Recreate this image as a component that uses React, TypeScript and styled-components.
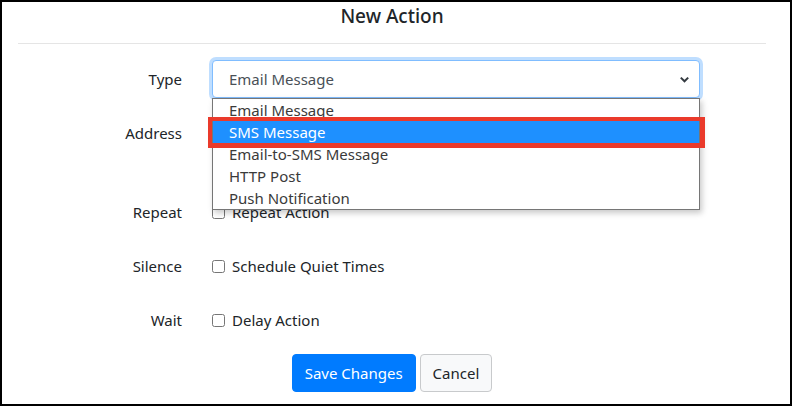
import React from "react";
import styled, { createGlobalStyle } from "styled-components";

const GlobalStyle = createGlobalStyle`
  html, body { margin: 0; padding: 0; background: #fff; }
  body { font-family: "Noto Sans", "Open Sans", sans-serif; color: #212529; }
  * { box-sizing: border-box; }
`;

const Frame = styled.div`
  width: 792px;
  height: 406px;
  border: 2px solid #000;
  background: #fff;
  overflow: hidden;
`;

const Inner = styled.div`
  width: 780px;
`;

const Header = styled.div`
  margin: 0 16px;
  height: 42px;
  border-bottom: 1px solid #e5e5e5;
  text-align: center;
`;

const Title = styled.h5`
  margin: 0;
  font-size: 19px;
  font-weight: 500;
  line-height: 28px;
  color: #212529;
`;

const Form = styled.div`
  padding-top: 16px;
`;

const Row = styled.div<{ $gap?: number }>`
  display: grid;
  grid-template-columns: 180px 488px;
  column-gap: 30px;
  align-items: start;
  margin-bottom: ${(p) => p.$gap ?? 16}px;
`;

const Label = styled.label`
  text-align: right;
  font-size: 15px;
  line-height: 24px;
  padding-top: 7px;
`;

const Control = styled.div`
  position: relative;
`;

const SelectBox = styled.div`
  height: 38px;
  border: 1px solid #80bdff;
  border-radius: 4px;
  box-shadow: 0 0 0 3px rgba(0, 123, 255, 0.25);
  display: flex;
  align-items: center;
  justify-content: space-between;
  padding: 0 9px 0 16px;
  font-size: 15px;
  color: #495057;
  background: #fff;
`;

const Chevron = styled.svg`
  width: 11px;
  height: 11px;
`;

const Dropdown = styled.ul`
  position: absolute;
  z-index: 5;
  top: 38px;
  left: 0;
  width: 488px;
  margin: 0;
  padding: 0;
  list-style: none;
  background: #fff;
  border: 1px solid #767676;
  box-shadow: 2px 3px 6px rgba(0, 0, 0, 0.22);
`;

const Option = styled.li<{ $selected?: boolean }>`
  position: relative;
  height: 22px;
  line-height: 22px;
  padding-left: 16px;
  font-size: 15px;
  color: ${(p) => (p.$selected ? "#fff" : "#3a3a3a")};
  background: ${(p) => (p.$selected ? "#1e90ff" : "transparent")};

  ${(p) =>
    p.$selected &&
    `
    &::after {
      content: "";
      position: absolute;
      top: -4px;
      bottom: -5px;
      left: -5px;
      right: -6px;
      border: 4px solid #ea3a2b;
      border-right-width: 5px;
      border-bottom-width: 5px;
    }
  `}
`;

const TextInput = styled.div`
  height: 38px;
  border: 1px solid #ced4da;
  border-radius: 4px;
`;

const HelpSpace = styled.div`
  height: 25px;
`;

const CheckLine = styled.label`
  display: flex;
  align-items: center;
  height: 38px;
  font-size: 15px;
  gap: 7px;
`;

const Box = styled.span`
  width: 13px;
  height: 13px;
  border: 1px solid #767676;
  border-radius: 2.5px;
  background: #fff;
  flex: none;
`;

const Footer = styled.div`
  display: flex;
  justify-content: center;
  gap: 4px;
`;

const Button = styled.button<{ $primary?: boolean }>`
  height: 38px;
  padding: 0 12px;
  font-family: inherit;
  font-size: 15px;
  border-radius: 4px;
  border: 1px solid ${(p) => (p.$primary ? "#007bff" : "#c8cacc")};
  background: ${(p) => (p.$primary ? "#007bff" : "#f8f9fa")};
  color: ${(p) => (p.$primary ? "#fff" : "#212529")};
`;

const options = [
  "Email Message",
  "SMS Message",
  "Email-to-SMS Message",
  "HTTP Post",
  "Push Notification",
];

export default function App() {
  return (
    <>
      <GlobalStyle />
      <Frame>
        <Inner>
          <Header>
            <Title>New Action</Title>
          </Header>
          <Form>
            <Row>
              <Label>Type</Label>
              <Control>
                <SelectBox>
                  <span>Email Message</span>
                  <Chevron viewBox="0 0 11 11">
                    <path d="M1.8 3.6 L5.5 7.3 L9.2 3.6" fill="none" stroke="#343a40" strokeWidth="2" />
                  </Chevron>
                </SelectBox>
                <Dropdown>
                  {options.map((o, i) => (
                    <Option key={o} $selected={i === 1}>
                      {o}
                    </Option>
                  ))}
                </Dropdown>
              </Control>
            </Row>
            <Row>
              <Label>Address</Label>
              <Control>
                <TextInput />
                <HelpSpace />
              </Control>
            </Row>
            <Row>
              <Label>Repeat</Label>
              <CheckLine>
                <Box />
                Repeat Action
              </CheckLine>
            </Row>
            <Row>
              <Label>Silence</Label>
              <CheckLine>
                <Box />
                Schedule Quiet Times
              </CheckLine>
            </Row>
            <Row $gap={15}>
              <Label>Wait</Label>
              <CheckLine>
                <Box />
                Delay Action
              </CheckLine>
            </Row>
            <Footer>
              <Button $primary>Save Changes</Button>
              <Button>Cancel</Button>
            </Footer>
          </Form>
        </Inner>
      </Frame>
    </>
  );
}
